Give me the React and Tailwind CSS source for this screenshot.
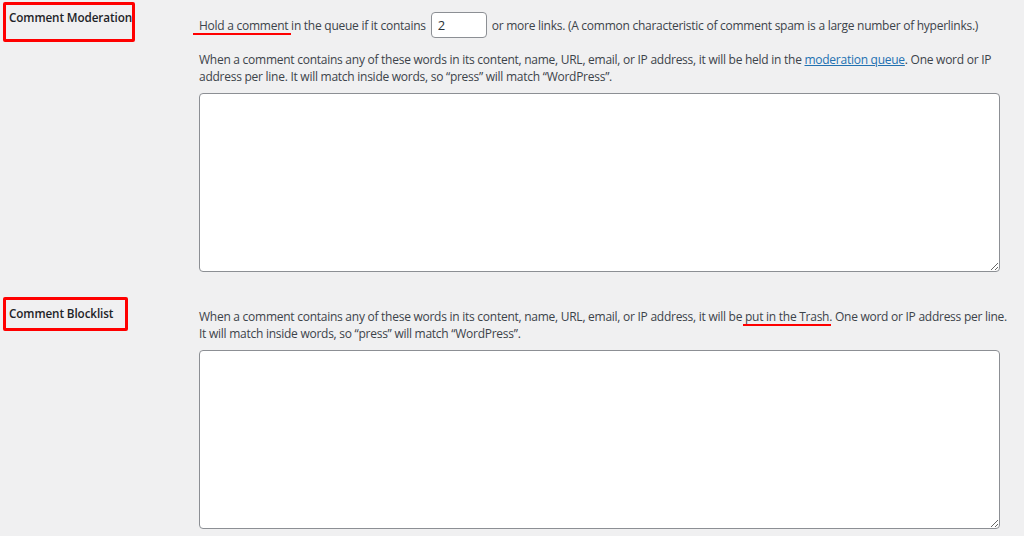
import React from "react";

const Mark = ({ children, line }) => (
  <span className="relative">
    {children}
    <span className={`absolute top-[16px] h-[2px] bg-[#ff0000] ${line}`} />
  </span>
);

const App = () => {
  return (
    <div
      className="w-[1024px] h-[536px] overflow-hidden bg-[#f0f0f1] text-[#3c434a] text-[12px] leading-[17px] tracking-[-0.26px]"
      style={{ fontFamily: '"Open Sans", "Noto Sans", sans-serif' }}
    >
      {/* Comment Moderation */}
      <div className="flex">
        <div className="w-[199px] shrink-0 pt-[2px] pl-[3px]">
          <div className="w-[132px] h-[40px] border-[3px] border-[#ff0000] rounded-[2px] pl-[3px] pt-[4px] font-semibold text-[11.7px] tracking-[-0.1px] text-[#1d2327] whitespace-nowrap">
            Comment Moderation
          </div>
        </div>
        <div className="w-[801px] pt-[12px]">
          <div className="flex items-center h-[26px] whitespace-nowrap">
            <span>
              <Mark line="-left-[6px] -right-[3px]">Hold a comment</Mark> in the queue if it contains
            </span>
            <input
              type="text"
              defaultValue="2"
              className="mx-[5px] w-[56px] h-[26px] px-[6px] bg-white border border-[#8c8f94] rounded-[4px] text-[13px] text-[#2c3338] outline-none"
            />
            <span>or more links. (A common characteristic of comment spam is a large number of hyperlinks.)</span>
          </div>
          <p className="mt-[13px] pr-[2px]">
            When a comment contains any of these words in its content, name, URL, email, or IP address, it will be held in the{" "}
            <a href="#" className="text-[#2271b1] underline">moderation queue</a>. One word or IP address per line. It will match inside words, so “press” will match “WordPress”.
          </p>
          <textarea className="block mt-[8px] w-[801px] h-[179px] bg-white border border-[#8c8f94] rounded-[4px] outline-none" />
        </div>
      </div>

      {/* Comment Blocklist */}
      <div className="flex mt-[25px]">
        <div className="w-[199px] shrink-0 pl-[3px]">
          <div className="w-[125px] h-[34px] border-[3px] border-[#ff0000] rounded-[2px] pl-[3px] pt-[5px] font-semibold text-[11.7px] tracking-[-0.1px] text-[#1d2327] whitespace-nowrap">
            Comment Blocklist
          </div>
        </div>
        <div className="w-[801px] pt-[11px]">
          <p className="w-[812px]">
            When a comment contains any of these words in its content, name, URL, email, or IP address, it will be{" "}
            <Mark line="-left-[2px] -right-[2px]">put in the Trash</Mark>. One word or IP address per line. It will match inside words, so “press” will match “WordPress”.
          </p>
          <textarea className="block mt-[8px] w-[801px] h-[179px] bg-white border border-[#8c8f94] rounded-[4px] outline-none" />
        </div>
      </div>
    </div>
  );
};

export default App;
